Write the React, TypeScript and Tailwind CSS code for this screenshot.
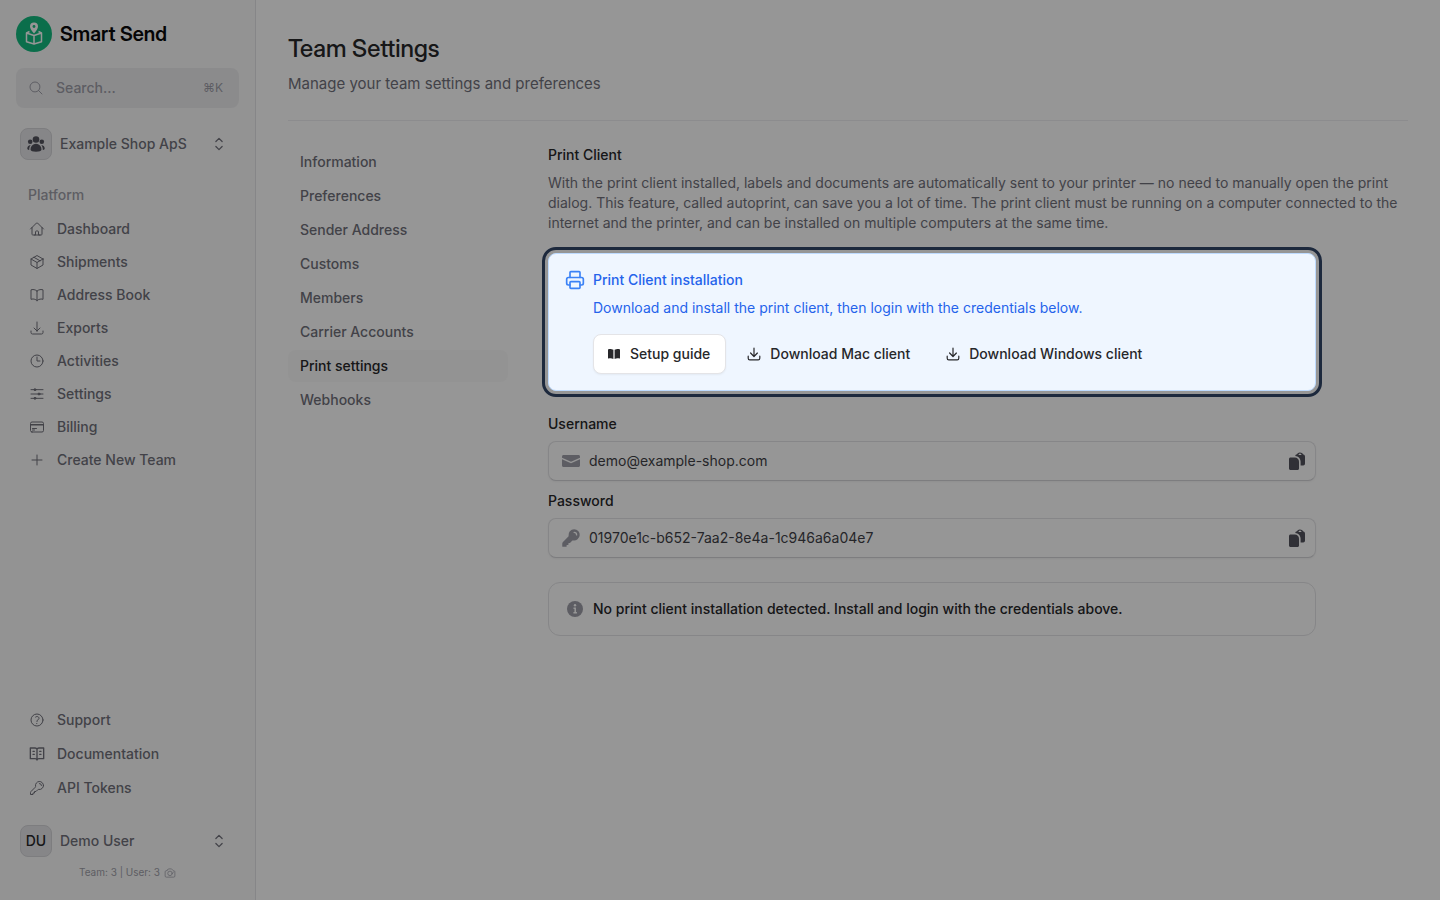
import type { ComponentType, ReactNode, SVGProps } from 'react'
import {
  HiKey,
  HiMiniArrowDownTray,
  HiOutlineArrowDownTray,
  HiOutlineBookOpen,
  HiOutlineCamera,
  HiOutlineChevronUpDown,
  HiOutlineClock,
  HiOutlineCreditCard,
  HiOutlineHome,
  HiOutlineKey,
  HiOutlineMagnifyingGlass,
  HiOutlinePlus,
  HiOutlineQuestionMarkCircle,
} from 'react-icons/hi2'

type Icon = ComponentType<SVGProps<SVGSVGElement>>

function CubeIcon(props: SVGProps<SVGSVGElement>) {
  return (
    <svg viewBox="0 0 24 24" fill="none" stroke="currentColor" strokeWidth="1.5" strokeLinecap="round" strokeLinejoin="round" {...props}>
      <path d="M21 7.5v9l-9 5.2-9-5.2v-9l9-5.2 9 5.2Z" />
      <path d="M3 7.5l9 5.2 9-5.2M12 12.7v9M7.5 5l9 5.2" />
    </svg>
  )
}

function SlidersIcon(props: SVGProps<SVGSVGElement>) {
  return (
    <svg viewBox="0 0 24 24" fill="none" stroke="currentColor" strokeWidth="1.5" strokeLinecap="round" {...props}>
      <path d="M3 5.5h18M3 12h18M3 18.5h18" />
      <g fill="currentColor">
        <circle cx="9" cy="5.5" r="1.5" />
        <circle cx="15" cy="12" r="1.5" />
        <circle cx="9" cy="18.5" r="1.5" />
      </g>
    </svg>
  )
}

function DocsIcon(props: SVGProps<SVGSVGElement>) {
  return (
    <svg viewBox="0 0 24 24" fill="none" stroke="currentColor" strokeWidth="2" strokeLinecap="round" strokeLinejoin="round" {...props}>
      <path d="M12 5v16M12 5a3 3 0 0 0-3-2H2v16h7a3 3 0 0 1 3 2 3 3 0 0 1 3-2h7V3h-7a3 3 0 0 0-3 2Z" />
      <path d="M6 8h2M6 12.5h2M16 8h2M16 12.5h2" />
    </svg>
  )
}

function PrinterIcon(props: SVGProps<SVGSVGElement>) {
  return (
    <svg viewBox="0 0 24 24" fill="none" stroke="currentColor" strokeWidth="2" strokeLinecap="round" strokeLinejoin="round" {...props}>
      <path d="M6 18H4a2 2 0 0 1-2-2v-5a2 2 0 0 1 2-2h16a2 2 0 0 1 2 2v5a2 2 0 0 1-2 2h-2" />
      <path d="M6 9V3a1 1 0 0 1 1-1h10a1 1 0 0 1 1 1v6" />
      <rect x="6" y="14" width="12" height="8" rx="1" />
    </svg>
  )
}

function BookIcon(props: SVGProps<SVGSVGElement>) {
  return (
    <svg viewBox="0 0 16 16" fill="currentColor" {...props}>
      <path d="M7.4 3.7C6.3 3 5 2.9 4 2.9c-.6 0-1.200.1-1.6.3a.6.6 0 0 0-.4.5v8.3c0 .4.4.7.8.6 1.4-.4 3.200-.3 4.600.5Z" />
      <path d="M8.600 13.100c1.400-.8 3.200-.9 4.600-.5.4.1.8-.2.8-.6V3.7a.6.6 0 0 0-.4-.5c-.4-.2-1-.3-1.6-.3-1 0-2.300.1-3.400.8Z" />
    </svg>
  )
}

function EnvelopeIcon(props: SVGProps<SVGSVGElement>) {
  return (
    <svg viewBox="0 0 20 20" fill="currentColor" {...props}>
      <path d="M1 5.5C1 4.7 1.7 4 2.5 4h15c.8 0 1.5.7 1.5 1.5v1.300l-9 4-9-4Z" />
      <path d="M1 8.2v6.300c0 .8.7 1.5 1.5 1.5h15c.8 0 1.5-.7 1.5-1.5V8.200l-9 4Z" />
    </svg>
  )
}

function InfoIcon(props: SVGProps<SVGSVGElement>) {
  return (
    <svg viewBox="0 0 20 20" {...props}>
      <circle cx="10" cy="10" r="8" fill="currentColor" />
      <circle cx="10" cy="6.2" r="1.2" fill="#fff" />
      <path d="M8.5 9.2H10.2V13.8M8.4 13.8h3.5" fill="none" stroke="#fff" strokeWidth="1.5" />
    </svg>
  )
}

function TeamIcon(props: SVGProps<SVGSVGElement>) {
  return (
    <svg viewBox="0 0 20 20" fill="currentColor" {...props}>
      <circle cx="10" cy="5.5" r="3.3" />
      <circle cx="4.2" cy="7.8" r="2.3" />
      <circle cx="15.8" cy="7.8" r="2.3" />
      <path d="M10 9.8a5.5 5.5 0 0 0-5.5 5.7c0 1.3 2.5 2.3 5.5 2.3s5.5-1 5.5-2.300A5.5 5.5 0 0 0 10 9.8Z" />
      <path d="M4.7 11A3.8 3.8 0 0 0 1.3 15c.4.6 1.1.9 1.9 1 0-2 .4-3.6 1.5-5ZM15.3 11a3.8 3.8 0 0 1 3.4 4c-.4.6-1.1.9-1.9 1 0-2-.4-3.6-1.5-5Z" />
    </svg>
  )
}

function CopyIcon(props: SVGProps<SVGSVGElement>) {
  return (
    <svg viewBox="0 0 20 20" fill="currentColor" {...props}>
      <path d="M3.5 6.5h4.3c2.4 0 4.2 1.9 4.2 4.2v6.8c0 .8-.6 1.5-1.5 1.5h-7C2.7 19 2 18.3 2 17.5V8c0-.8.7-1.5 1.5-1.5Z" />
      <path fillRule="evenodd" d="M8.2 5A2.2 2.2 0 0 1 9.9 3.2 3.2 3.2 0 0 1 13 1.4c1.4 0 2.6.7 3 1.8A2.2 2.2 0 0 1 18 5.4v7.1c0 1.1-.7 2-1.8 2H13.6v-3.8C13.6 7.6 11.3 5.2 8.2 5ZM11.5 4h3a1.5 1.5 0 0 0-3 0Z" />
    </svg>
  )
}

function Logo() {
  return (
    <svg viewBox="0 0 36 36" className="size-9" aria-hidden="true">
      <circle cx="18" cy="18" r="18" fill="#14bb80" />
      <path d="M18 6.5a4 4 0 0 0-4 4c0 2.8 4 7 4 7s4-4.2 4-7a4 4 0 0 0-4-4Z" fill="#fff" />
      <circle cx="18" cy="10.5" r="1.4" fill="#14bb80" />
      <path d="M13.5 15.5l-3 1.5v8.8L18 28l7.5-2.2V17l-3-1.5M10.5 17 18 19.5l7.5-2.5M18 19.5V28" fill="none" stroke="#fff" strokeWidth="1.5" strokeLinejoin="round" />
    </svg>
  )
}

const platform: { label: string; icon: Icon }[] = [
  { label: 'Dashboard', icon: HiOutlineHome },
  { label: 'Shipments', icon: CubeIcon },
  { label: 'Address Book', icon: HiOutlineBookOpen },
  { label: 'Exports', icon: HiOutlineArrowDownTray },
  { label: 'Activities', icon: HiOutlineClock },
  { label: 'Settings', icon: SlidersIcon },
  { label: 'Billing', icon: HiOutlineCreditCard },
  { label: 'Create New Team', icon: HiOutlinePlus },
]

const resources: { label: string; icon: Icon }[] = [
  { label: 'Support', icon: HiOutlineQuestionMarkCircle },
  { label: 'Documentation', icon: DocsIcon },
  { label: 'API Tokens', icon: HiOutlineKey },
]

const tabs = [
  'Information',
  'Preferences',
  'Sender Address',
  'Customs',
  'Members',
  'Carrier Accounts',
  'Print settings',
  'Webhooks',
]

function NavItem({ label, icon: ItemIcon }: { label: string; icon: Icon }) {
  return (
    <a href="#" className="flex h-8 items-center gap-3 rounded-lg px-[13px] text-sm font-medium text-zinc-500">
      <ItemIcon className="size-4" />
      {label}
    </a>
  )
}

function Profile({ avatar, name }: { avatar: ReactNode; name: string }) {
  return (
    <button type="button" className="flex h-10 w-full items-center gap-2 rounded-lg px-1 text-sm font-medium text-zinc-500">
      <span className="flex size-8 items-center justify-center rounded-lg border border-zinc-300 bg-zinc-200 text-zinc-800">
        {avatar}
      </span>
      <span className="flex-1 text-left">{name}</span>
      <HiOutlineChevronUpDown className="mr-1.5 size-5 text-zinc-500" />
    </button>
  )
}

function Sidebar() {
  return (
    <aside className="flex w-64 shrink-0 flex-col border-r border-zinc-200 bg-zinc-50 p-4">
      <a href="#" className="flex items-center gap-2 font-['Inter_Display',Inter,sans-serif] text-xl font-semibold text-zinc-950">
        <Logo />
        Smart Send
      </a>
      <label className="mt-4 flex h-10 items-center gap-3 rounded-lg bg-zinc-200/60 px-3 text-zinc-400">
        <HiOutlineMagnifyingGlass className="size-4" />
        <input
          type="search"
          aria-label="Search"
          placeholder="Search..."
          className="min-w-0 flex-1 text-sm font-medium placeholder:text-zinc-400"
        />
        <kbd className="pr-1 font-[Inter,'DejaVu_Sans',sans-serif] text-xs">⌘K</kbd>
      </label>
      <div className="mt-4">
        <Profile avatar={<TeamIcon className="size-5 text-zinc-600" />} name="Example Shop ApS" />
      </div>
      <nav className="mt-[13px]">
        <h2 className="flex h-9 items-center px-3 text-sm font-medium text-zinc-400">Platform</h2>
        <div className="flex flex-col gap-px">
          {platform.map((item) => (
            <NavItem key={item.label} {...item} />
          ))}
        </div>
      </nav>
      <nav className="mt-auto mb-[17px] flex flex-col gap-0.5">
        {resources.map((item) => (
          <NavItem key={item.label} {...item} />
        ))}
      </nav>
      <Profile avatar="DU" name="Demo User" />
      <p className="flex h-[23px] items-center justify-center gap-1 text-[10px] text-zinc-400">
        Team: 3 | User: 3
        <HiOutlineCamera className="size-3" />
      </p>
    </aside>
  )
}

function CopyField({ id, label, value, icon: FieldIcon }: { id: string; label: string; value: string; icon: Icon }) {
  return (
    <div>
      <label htmlFor={id} className="block text-sm font-medium text-zinc-800">
        {label}
      </label>
      <div className="mt-[7px] flex h-10 items-center gap-2 rounded-lg border border-zinc-200 border-b-zinc-300 bg-white px-3 shadow-xs">
        <FieldIcon className="size-5 text-zinc-400" />
        <input id={id} readOnly value={value} className="min-w-0 flex-1 text-sm text-zinc-700" />
        <button type="button" aria-label={`Copy ${label}`} className="-mr-1 text-zinc-600">
          <CopyIcon className="size-5" />
        </button>
      </div>
    </div>
  )
}

function InstallCallout() {
  return (
    <section className="relative z-20 mt-5 flex max-w-3xl gap-2 rounded-lg border border-blue-200 bg-[#eff6ff] p-4 outline-3 outline-offset-3 outline-slate-800">
      <PrinterIcon className="size-5 text-[#3b82f6]" />
      <div className="text-sm">
        <h3 className="font-medium text-[#2563eb]">Print Client installation</h3>
        <p className="mt-2 text-[#2563eb]">
          Download and install the print client, then login with the credentials below.
        </p>
        <div className="mt-4 flex gap-2 font-medium text-zinc-800">
          <button type="button" className="flex h-10 items-center gap-2 rounded-lg border border-zinc-200 bg-white pr-[15px] pl-3 shadow-xs">
            <BookIcon className="size-4" />
            Setup guide
          </button>
          <button type="button" className="flex h-10 items-center gap-2 pr-[15px] pl-3">
            <HiMiniArrowDownTray className="size-4" />
            Download Mac client
          </button>
          <button type="button" className="flex h-10 items-center gap-2 pr-[15px] pl-3">
            <HiMiniArrowDownTray className="size-4" />
            Download Windows client
          </button>
        </div>
      </div>
    </section>
  )
}

export default function App() {
  return (
    <div className="relative flex min-h-screen bg-white font-[Inter,sans-serif]">
      <Sidebar />
      <main className="flex-1 p-8">
        <h1 className="pt-px font-['Inter_Display',Inter,sans-serif] text-2xl font-medium text-zinc-800">Team Settings</h1>
        <p className="mt-[7px] text-[15px] leading-6 text-zinc-500">Manage your team settings and preferences</p>
        <hr className="mt-6 border-zinc-200/60" />
        <div className="mt-6 flex gap-10">
          <nav className="flex w-[220px] shrink-0 flex-col gap-0.5 pt-px">
            {tabs.map((tab) => (
              <a
                key={tab}
                href="#"
                className={
                  tab === 'Print settings'
                    ? 'flex h-8 items-center rounded-lg bg-zinc-50 px-3 text-sm font-medium text-zinc-800'
                    : 'flex h-8 items-center rounded-lg px-3 text-sm font-medium text-zinc-500'
                }
              >
                {tab}
              </a>
            ))}
          </nav>
          <div className="min-w-0 flex-1">
            <h2 className="text-sm font-medium text-zinc-800">Print Client</h2>
            <p className="mt-2 text-sm text-zinc-500">
              With the print client installed, labels and documents are automatically sent to your printer — no need to
              manually open the print dialog. This feature, called autoprint, can save you a lot of time. The print
              client must be running on a computer connected to the internet and the printer, and can be installed on
              multiple computers at the same time.
            </p>
            <InstallCallout />
            <div className="mt-[23px] flex max-w-3xl flex-col gap-2.5">
              <CopyField id="username" label="Username" value="demo@example-shop.com" icon={EnvelopeIcon} />
              <CopyField id="password" label="Password" value="01970e1c-b652-7aa2-8e4a-1c946a6a04e7" icon={HiKey} />
            </div>
            <div className="mt-6 flex max-w-3xl items-center gap-2 rounded-xl border border-zinc-200 p-4 text-sm font-medium text-zinc-800">
              <InfoIcon className="size-5 text-zinc-400" />
              No print client installation detected. Install and login with the credentials above.
            </div>
          </div>
        </div>
      </main>
      <div className="pointer-events-none absolute inset-0 z-10 bg-black/41" />
    </div>
  )
}
